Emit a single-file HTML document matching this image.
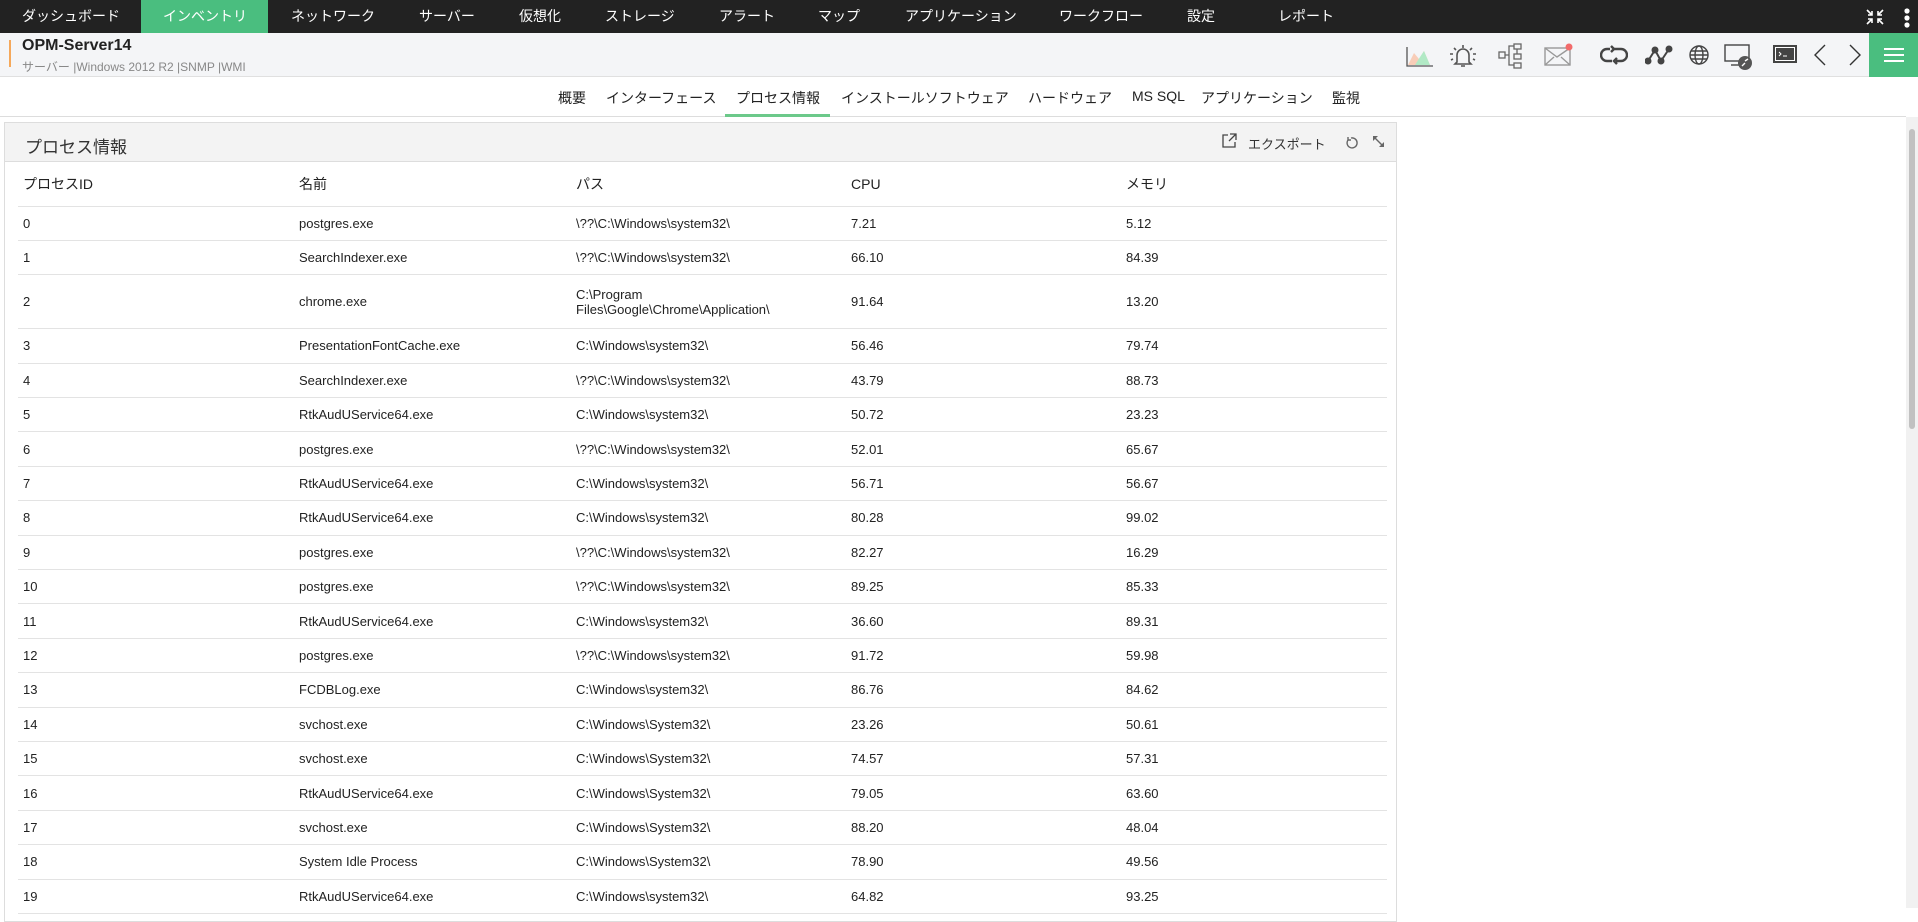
<!DOCTYPE html>
<html><head><meta charset="utf-8"><style>
*{margin:0;padding:0;box-sizing:border-box}
body{width:1918px;height:908px;overflow:hidden;background:#fff;font-family:"Liberation Sans","Noto Sans CJK JP",sans-serif;color:#222;position:relative}
.top{position:absolute;left:0;top:0;width:1918px;height:33px;background:#222}
.top span{position:absolute;top:0;line-height:33px;color:#fff;font-size:14px}
.green{position:absolute;left:141px;top:0;width:127px;height:33px;background:#4abe7f}
.hdr{position:absolute;left:0;top:33px;width:1918px;height:44px;background:#f4f5f7;border-bottom:1px solid #e0e0e0}
.ob{position:absolute;left:9px;top:7px;width:2px;height:27px;background:#f5a85a}
.t1{position:absolute;left:22px;top:4px;font-size:16px;font-weight:bold;color:#222}
.t2{position:absolute;left:22px;top:25px;font-size:12px;color:#888}
.ic{position:absolute;top:10px}
.ham{position:absolute;left:1869px;top:0;width:49px;height:44px;background:#4abe7f}
.ham i{position:absolute;left:15px;width:20px;height:2px;background:#fff}
.tabs{position:absolute;left:0;top:77px;width:1906px;height:40px;border-bottom:1px solid #ddd}
.tabs span{position:absolute;top:11px;font-size:14px;color:#222}
.ul{position:absolute;left:725px;top:37px;width:105px;height:3px;background:#6cc98a}
.sb{position:absolute;left:1906px;top:117px;width:12px;height:791px;background:#f1f1f1}
.sb i{position:absolute;left:3px;top:12px;width:6px;height:300px;background:#c1c1c1;border-radius:3px}
.panel{position:absolute;left:4px;top:122px;width:1393px;height:800px;border:1px solid #ddd;background:#fff}
.ph{height:39px;background:#f3f3f3;border-bottom:1px solid #ddd;position:relative}
.ph .tt{position:absolute;left:20px;top:10px;font-size:17px;color:#333}
.ph .ex{position:absolute;left:1243px;top:11px;font-size:13px;color:#333}
table{border-collapse:collapse;position:absolute;left:13px;top:39px;width:1369px;font-size:13px}
td,th{text-align:left;font-weight:normal;padding:0 0 0 5px;border-bottom:1px solid #e3e3e3;height:34.4px;vertical-align:middle;color:#222}
th{height:44px;font-size:14px}
col.a{width:276px}col.b{width:277px}col.c{width:275px}col.d{width:275px}
</style></head><body>
<div class="top">
<div class="green"></div>
<span style="left:22px">ダッシュボード</span><span style="left:163px">インベントリ</span><span style="left:291px">ネットワーク</span><span style="left:419px">サーバー</span><span style="left:519px">仮想化</span><span style="left:605px">ストレージ</span><span style="left:719px">アラート</span><span style="left:818px">マップ</span><span style="left:905px">アプリケーション</span><span style="left:1059px">ワークフロー</span><span style="left:1187px">設定</span><span style="left:1278px">レポート</span>
<svg style="position:absolute;left:1866px;top:9px" width="18" height="16" stroke="#fff" stroke-width="1.6" fill="none"><path d="M1 1l5 5M6 2v4H2M17 1l-5 5M12 2v4h4M1 15l5-5M2 10h4v4M17 15l-5-5M16 10h-4v4"/></svg>
<svg style="position:absolute;left:1903px;top:8px" width="8" height="20" fill="#fff"><circle cx="4" cy="3" r="2.6"/><circle cx="4" cy="10" r="2.6"/><circle cx="4" cy="17" r="2.6"/></svg>
</div>
<div class="hdr"><div class="ob"></div><div class="t1">OPM-Server14</div><div class="t2">サーバー |Windows 2012 R2 |SNMP |WMI</div>
<svg class="ic" style="left:1405px" width="28" height="24"><path d="M3 22L9 10l5 6 5-8 6 14z" fill="#f9c3a8" opacity=".8"/><path d="M10 22l5-8 4-6 6 14z" fill="#9ff0c8" opacity=".8"/><path d="M2 4v19h26" stroke="#555" stroke-width="1.3" fill="none"/></svg>
<svg class="ic" style="left:1449px" width="28" height="26" stroke="#555" stroke-width="1.6" fill="none"><path d="M8 19V12a6 6 0 0 1 12 0v7l2 2H6z M12 23h4M14 2v3M5 5l2 2M23 5l-2 2M1 11h3M24 11h3M2 17l2-1M26 17l-2-1"/></svg>
<svg class="ic" style="left:1497px" width="26" height="26" stroke="#666" stroke-width="1.3" fill="none"><rect x="2" y="9" width="6" height="6"/><rect x="17" y="1" width="7" height="5"/><rect x="17" y="11" width="7" height="5"/><rect x="17" y="20" width="7" height="5"/><path d="M8 12h4V3h5M12 12v10h5M20 6v5"/></svg>
<svg class="ic" style="left:1544px" width="30" height="24" stroke="#999" stroke-width="1.4" fill="none"><rect x="1" y="5" width="25" height="17"/><path d="M1 5l12 9 13-9M1 22l9-8M26 22l-9-8"/><circle cx="25" cy="4" r="3.5" fill="#f26b6b" stroke="none"/></svg>
<svg class="ic" style="left:1600px" width="28" height="24" stroke="#444" stroke-width="2.4" fill="none"><path d="M10 6H7a6 6 0 0 0 0 12h5M16 18h5a6 6 0 0 0 0-12h-7"/><path d="M11 3l3 3-3 3M17 15l-3 3 3 3"/></svg>
<svg class="ic" style="left:1645px" width="28" height="24" stroke="#444" stroke-width="2" fill="#444"><path d="M3 18l7-11 6 11 8-12" fill="none"/><circle cx="3" cy="18" r="2.5"/><circle cx="10" cy="7" r="2.5"/><circle cx="16" cy="18" r="2.5"/><circle cx="24" cy="6" r="2.5"/></svg>
<svg class="ic" style="left:1687px" width="24" height="24" stroke="#444" stroke-width="1.4" fill="none"><circle cx="12" cy="12" r="9"/><ellipse cx="12" cy="12" rx="4" ry="9"/><path d="M3 12h18M4 8h16M4 16h16"/></svg>
<svg class="ic" style="left:1723px" width="32" height="28" stroke="#444" stroke-width="1.4" fill="none"><rect x="2" y="2" width="24" height="16"/><path d="M8 22h10"/><circle cx="22" cy="20" r="7" fill="#555" stroke="none"/><path d="M19 23l3-3M22 18l3-2" stroke="#fff"/></svg>
<svg class="ic" style="left:1773px" width="26" height="24"><rect x="1" y="3" width="22" height="16" fill="#fff" stroke="#444" stroke-width="2"/><rect x="3" y="5" width="18" height="12" fill="#444"/><path d="M6 9l2 2-2 2M10 13h4" stroke="#fff" fill="none"/></svg>
<svg class="ic" style="left:1813px" width="14" height="24" stroke="#333" stroke-width="1.4" fill="none"><path d="M12 2L2 12l10 10"/></svg>
<svg class="ic" style="left:1848px" width="14" height="24" stroke="#333" stroke-width="1.4" fill="none"><path d="M2 2l10 10L2 22"/></svg>
<div class="ham"><i style="top:15px"></i><i style="top:21px"></i><i style="top:27px"></i></div>
</div>
<div class="tabs"><span style="left:558px">概要</span><span style="left:606px">インターフェース</span><span style="left:736px">プロセス情報</span><span style="left:841px">インストールソフトウェア</span><span style="left:1028px">ハードウェア</span><span style="left:1132px">MS SQL</span><span style="left:1201px">アプリケーション</span><span style="left:1332px">監視</span><div class="ul"></div></div>
<div class="sb"><i></i></div>
<div class="panel"><div class="ph"><div class="tt">プロセス情報</div>
<svg style="position:absolute;left:1216px;top:10px" width="16" height="16" stroke="#444" stroke-width="1.3" fill="none"><path d="M7 2H2v12h12V9M9 1h6v6M15 1L8 8"/></svg>
<div class="ex">エクスポート</div>
<svg style="position:absolute;left:1340px;top:13px" width="13" height="13" stroke="#666" stroke-width="1.4" fill="none"><path d="M3 4a5 5 0 1 0 3-2M3 1v3h3"/></svg>
<svg style="position:absolute;left:1368px;top:13px" width="11" height="11" fill="#666"><path d="M0 0l5 0-2 2 3 3-1 1-3-3-2 2zM11 11H6l2-2-3-3 1-1 3 3 2-2z"/></svg>
</div>
<table><colgroup><col class="a"><col class="b"><col class="c"><col class="d"><col></colgroup>
<tr><th>プロセスID</th><th>名前</th><th>パス</th><th>CPU</th><th>メモリ</th></tr>
<tr><td>0</td><td>postgres.exe</td><td>\??\C:\Windows\system32\</td><td>7.21</td><td>5.12</td></tr>
<tr><td>1</td><td>SearchIndexer.exe</td><td>\??\C:\Windows\system32\</td><td>66.10</td><td>84.39</td></tr>
<tr><td style="height:54px">2</td><td>chrome.exe</td><td>C:\Program<br>Files\Google\Chrome\Application\</td><td>91.64</td><td>13.20</td></tr>
<tr><td>3</td><td>PresentationFontCache.exe</td><td>C:\Windows\system32\</td><td>56.46</td><td>79.74</td></tr>
<tr><td>4</td><td>SearchIndexer.exe</td><td>\??\C:\Windows\system32\</td><td>43.79</td><td>88.73</td></tr>
<tr><td>5</td><td>RtkAudUService64.exe</td><td>C:\Windows\system32\</td><td>50.72</td><td>23.23</td></tr>
<tr><td>6</td><td>postgres.exe</td><td>\??\C:\Windows\system32\</td><td>52.01</td><td>65.67</td></tr>
<tr><td>7</td><td>RtkAudUService64.exe</td><td>C:\Windows\system32\</td><td>56.71</td><td>56.67</td></tr>
<tr><td>8</td><td>RtkAudUService64.exe</td><td>C:\Windows\system32\</td><td>80.28</td><td>99.02</td></tr>
<tr><td>9</td><td>postgres.exe</td><td>\??\C:\Windows\system32\</td><td>82.27</td><td>16.29</td></tr>
<tr><td>10</td><td>postgres.exe</td><td>\??\C:\Windows\system32\</td><td>89.25</td><td>85.33</td></tr>
<tr><td>11</td><td>RtkAudUService64.exe</td><td>C:\Windows\system32\</td><td>36.60</td><td>89.31</td></tr>
<tr><td>12</td><td>postgres.exe</td><td>\??\C:\Windows\system32\</td><td>91.72</td><td>59.98</td></tr>
<tr><td>13</td><td>FCDBLog.exe</td><td>C:\Windows\system32\</td><td>86.76</td><td>84.62</td></tr>
<tr><td>14</td><td>svchost.exe</td><td>C:\Windows\System32\</td><td>23.26</td><td>50.61</td></tr>
<tr><td>15</td><td>svchost.exe</td><td>C:\Windows\System32\</td><td>74.57</td><td>57.31</td></tr>
<tr><td>16</td><td>RtkAudUService64.exe</td><td>C:\Windows\System32\</td><td>79.05</td><td>63.60</td></tr>
<tr><td>17</td><td>svchost.exe</td><td>C:\Windows\System32\</td><td>88.20</td><td>48.04</td></tr>
<tr><td>18</td><td>System Idle Process</td><td>C:\Windows\System32\</td><td>78.90</td><td>49.56</td></tr>
<tr><td>19</td><td>RtkAudUService64.exe</td><td>C:\Windows\system32\</td><td>64.82</td><td>93.25</td></tr>
</table></div>
</body></html>
